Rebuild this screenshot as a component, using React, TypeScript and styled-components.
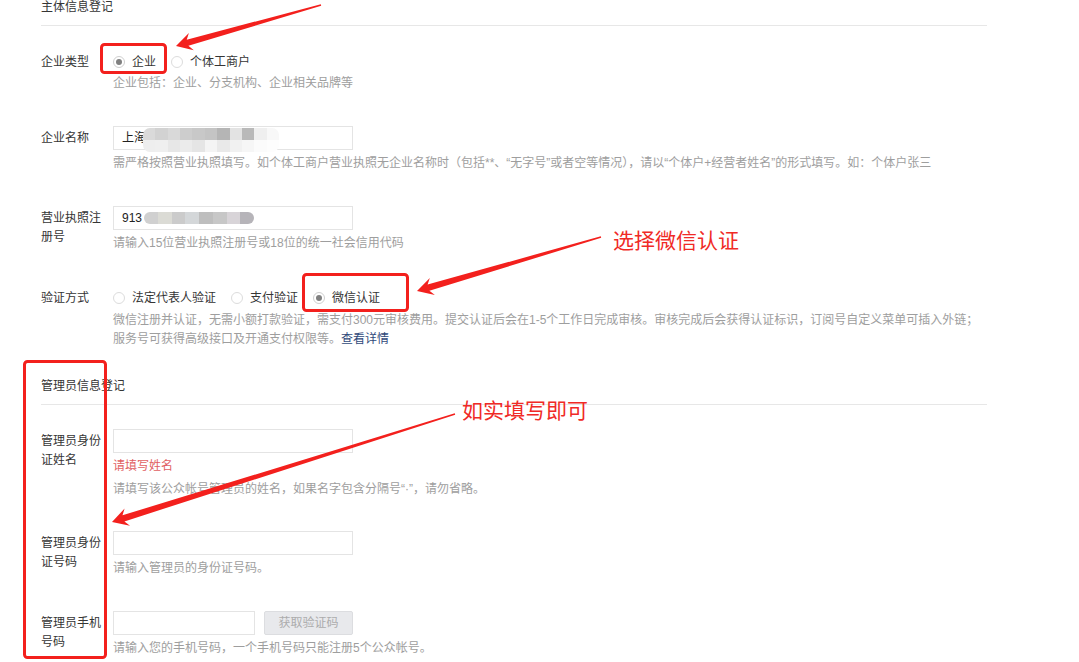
import React from "react";
import styled, { createGlobalStyle } from "styled-components";

const RED = "#f3201d";

const GlobalStyle = createGlobalStyle`
  html, body {
    margin: 0;
    padding: 0;
    background: #ffffff;
  }
  body {
    font-family: "Liberation Sans", "Noto Sans CJK SC", sans-serif;
    font-size: 12px;
    color: #353535;
  }
`;

export default function App() {
  return (
    <>
      <GlobalStyle />
      <Page>
        <Form>
          <SectionHead $top={0}>主体信息登记</SectionHead>

          <Row $top={24}>
            <Label>企业类型</Label>
            <Control>
              <RadioGroup>
                <Radio checked>企业</Radio>
                <Radio>个体工商户</Radio>
              </RadioGroup>
              <Hint $gap={0}>企业包括：企业、分支机构、企业相关品牌等</Hint>
            </Control>
          </Row>

          <Row $top={33}>
            <Label>企业名称</Label>
            <Control>
              <Input>
                上海
                <Mosaic
                  $left={29}
                  $top={1}
                  $width={136}
                  rows={[
                    ["#dadada", "#d2d2d2", "#d9d9d9", "#cdcdcd", "#c8c8c8", "#c4c4c4", "#b5b5b5", "#e3e3e3", "#b9b9b9", "#efefef", "#f8f8f8"],
                    ["#eeeeee", "#efefef", "#e7e7e7", "#ebebeb", "#e5e5e5", "#f4f4f4", "#e9e9e9", "#f1f1f1", "#f6f6f6", "#fbfbfb", "#fdfdfd"],
                  ]}
                />
              </Input>
              <Hint>
                需严格按照营业执照填写。如个体工商户营业执照无企业名称时（包括**、“无字号”或者空等情况），请以“个体户+经营者姓名”的形式填写。如：个体户张三
              </Hint>
            </Control>
          </Row>

          <Row $top={33}>
            <Label>营业执照注册号</Label>
            <Control>
              <Input>
                913
                <Mosaic
                  $left={30}
                  $top={5}
                  $width={110}
                  rows={[["#d0d0d0", "#dbdbd5", "#cbcbcb", "#d4d7d9", "#bebebe", "#c7c7c7", "#d8d4d8", "#b6b4b9"]]}
                />
              </Input>
              <Hint>请输入15位营业执照注册号或18位的统一社会信用代码</Hint>
            </Control>
          </Row>

          <Row $top={33}>
            <Label>验证方式</Label>
            <Control>
              <RadioGroup>
                <Radio>法定代表人验证</Radio>
                <Radio>支付验证</Radio>
                <Radio checked>微信认证</Radio>
              </RadioGroup>
              <Hint $gap={1}>
                微信注册并认证，无需小额打款验证，需支付300元审核费用。提交认证后会在1-5个工作日完成审核。审核完成后会获得认证标识，订阅号自定义菜单可插入外链；
                <br />
                服务号可获得高级接口及开通支付权限等。<Link>查看详情</Link>
              </Hint>
            </Control>
          </Row>

          <SectionHead $top={30}>管理员信息登记</SectionHead>

          <Row $top={24}>
            <Label>管理员身份证姓名</Label>
            <Control>
              <Input />
              <ErrorText>请填写姓名</ErrorText>
              <Hint>请填写该公众帐号管理员的姓名，如果名字包含分隔号“·”，请勿省略。</Hint>
            </Control>
          </Row>

          <Row $top={32}>
            <Label>管理员身份证号码</Label>
            <Control>
              <Input />
              <Hint>请输入管理员的身份证号码。</Hint>
            </Control>
          </Row>

          <Row $top={33}>
            <Label>管理员手机号码</Label>
            <Control>
              <InputLine>
                <Input $width={142} />
                <CodeButton>获取验证码</CodeButton>
              </InputLine>
              <Hint>请输入您的手机号码，一个手机号码只能注册5个公众帐号。</Hint>
            </Control>
          </Row>
        </Form>

        <Overlay width="1079" height="662" viewBox="0 0 1079 662">
          <rect x="101.5" y="44.5" width="64" height="28" rx="3" fill="none" stroke={RED} strokeWidth="3" />
          <rect x="303.5" y="274.5" width="104" height="36" rx="3" fill="none" stroke={RED} strokeWidth="3" />
          <rect x="24.5" y="361.5" width="81" height="296" rx="3" fill="none" stroke={RED} strokeWidth="3" />
          <Arrow from={[321, 5]} to={[176, 46]} />
          <Arrow from={[601, 237]} to={[417, 291]} />
          <Arrow from={[455, 414]} to={[112, 522]} />
        </Overlay>
        <Callout $x={613} $y={229}>选择微信认证</Callout>
        <Callout $x={462} $y={399}>如实填写即可</Callout>
      </Page>
    </>
  );
}

function Radio({ checked, children }: { checked?: boolean; children: React.ReactNode }) {
  return (
    <RadioItem>
      <RadioDot $checked={!!checked} />
      {children}
    </RadioItem>
  );
}

function Mosaic(props: { $left: number; $top: number; $width: number; rows: string[][] }) {
  const { rows, ...rest } = props;
  return (
    <MosaicBox {...rest} $cols={rows[0].length}>
      {rows.flat().map((c, i) => (
        <Cell key={i} $color={c} />
      ))}
    </MosaicBox>
  );
}

// screenshot-tool style arrow: thin tail, widening shaft, notched head
function Arrow({ from, to }: { from: [number, number]; to: [number, number] }) {
  const [x0, y0] = from;
  const [x1, y1] = to;
  const len = Math.hypot(x1 - x0, y1 - y0);
  const ux = (x1 - x0) / len;
  const uy = (y1 - y0) / len;
  const nx = -uy;
  const ny = ux;
  const at = (back: number, side: number) =>
    `${(x1 - ux * back + nx * side).toFixed(1)},${(y1 - uy * back + ny * side).toFixed(1)}`;
  const pts = [
    at(0, 0),
    at(16, 9),
    at(12, 3.2),
    at(len, 0.8),
    at(len, -0.8),
    at(12, -3.2),
    at(16, -9),
  ].join(" ");
  return <polygon points={pts} fill={RED} />;
}

const Page = styled.div`
  position: relative;
  width: 1079px;
  height: 662px;
  overflow: hidden;
  background: #fff;
`;

const Form = styled.div`
  width: 946px;
  padding-left: 41px;
  display: flex;
  flex-direction: column;
`;

const SectionHead = styled.div<{ $top: number }>`
  margin-top: ${({ $top }) => $top}px;
  padding-top: 1px;
  line-height: 12px;
  padding-bottom: 12px;
  border-bottom: 1px solid #e7e7e7;
  color: #353535;
`;

const Row = styled.div<{ $top: number }>`
  margin-top: ${({ $top }) => $top}px;
  display: grid;
  grid-template-columns: 72px 1fr;
`;

const Label = styled.div`
  width: 62px;
  padding-top: 2.5px;
  line-height: 19px;
  color: #353535;
  word-break: break-all;
`;

const Control = styled.div`
  display: flex;
  flex-direction: column;
  align-items: flex-start;
`;

const RadioGroup = styled.div`
  display: flex;
  align-items: center;
  height: 24px;
`;

const RadioItem = styled.label`
  display: flex;
  align-items: center;
  margin-right: 15px;
  color: #353535;
  line-height: 24px;
`;

const RadioDot = styled.span<{ $checked: boolean }>`
  box-sizing: border-box;
  width: 12px;
  height: 12px;
  margin-right: 7px;
  border-radius: 50%;
  border: 1px solid ${({ $checked }) => ($checked ? "#cfcfcf" : "#dcdcdc")};
  display: flex;
  align-items: center;
  justify-content: center;
  &::after {
    content: "";
    width: 6px;
    height: 6px;
    border-radius: 50%;
    background: ${({ $checked }) => ($checked ? "#808080" : "transparent")};
  }
`;

const Input = styled.div<{ $width?: number }>`
  position: relative;
  box-sizing: border-box;
  width: ${({ $width }) => $width ?? 240}px;
  height: 24px;
  border: 1px solid #e4e4e4;
  padding: 0 8px;
  line-height: 22px;
  color: #222;
  font-size: 12px;
`;

const InputLine = styled.div`
  display: flex;
  gap: 9px;
`;

const CodeButton = styled.div`
  box-sizing: border-box;
  width: 89px;
  height: 24px;
  line-height: 22px;
  text-align: center;
  background: #e8e9ec;
  border: 1px solid #dcdde0;
  border-radius: 2px;
  color: #acacac;
`;

const MosaicBox = styled.div<{ $left: number; $top: number; $width: number; $cols: number }>`
  position: absolute;
  left: ${({ $left }) => $left}px;
  top: ${({ $top }) => $top}px;
  width: ${({ $width }) => $width}px;
  display: grid;
  grid-template-columns: repeat(${({ $cols }) => $cols}, 1fr);
  grid-auto-rows: 12px;
  border-radius: 7px;
  overflow: hidden;
  filter: blur(0.6px);
`;

const Cell = styled.span<{ $color: string }>`
  background: ${({ $color }) => $color};
`;

const Hint = styled.div<{ $gap?: number }>`
  margin-top: ${({ $gap }) => $gap ?? 4}px;
  line-height: 19px;
  color: #9e9e9e;
  white-space: nowrap;
`;

const ErrorText = styled.div`
  margin-top: 4px;
  line-height: 19px;
  color: #e15f63;
`;

const Link = styled.span`
  color: #30497a;
`;

const Overlay = styled.svg`
  position: absolute;
  left: 0;
  top: 0;
  pointer-events: none;
`;

const Callout = styled.span<{ $x: number; $y: number }>`
  position: absolute;
  left: ${({ $x }) => $x}px;
  top: ${({ $y }) => $y}px;
  font-size: 21px;
  line-height: 24px;
  color: #f02a26;
  white-space: nowrap;
`;
